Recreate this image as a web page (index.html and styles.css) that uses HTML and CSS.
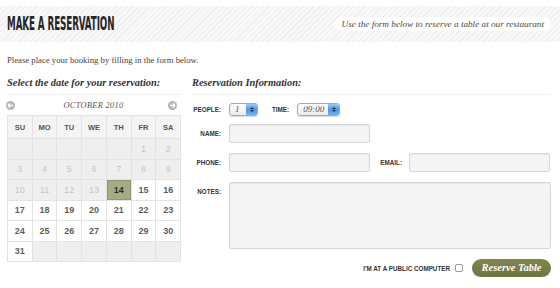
FILE: index.html
```html
<!DOCTYPE html>
<html>
<head>
<meta charset="utf-8">
<link rel="stylesheet" href="styles.css">
</head>
<body>
<header class="band">
  <h1 class="title">MAKE A RESERVATION</h1>
  <p class="tagline">Use the form below to reserve a table at our restaurant</p>
</header>
<main class="content">
  <p class="intro">Please place your booking by filling in the form below.</p>
  <div class="cols">
    <section class="cal-col">
      <h2 class="sec-title">Select the date for your reservation:</h2>
      <div class="cal-nav">
        <span class="nav-btn"><svg width="9" height="9" viewBox="0 0 9 9"><circle cx="4.5" cy="4.5" r="4.5" fill="#b5b5b5"/><path d="M2 4.5h5M2 4.5l2-2M2 4.5l2 2" stroke="#fff" stroke-width="1.4" fill="none"/></svg></span>
        <span class="month">OCTOBER 2010</span>
        <span class="nav-btn"><svg width="9" height="9" viewBox="0 0 9 9"><circle cx="4.5" cy="4.5" r="4.5" fill="#b5b5b5"/><path d="M2 4.5h5M7 4.5l-2-2M7 4.5l-2 2" stroke="#fff" stroke-width="1.4" fill="none"/></svg></span>
      </div>
      <div class="cal-grid">
        <div class="dow">SU</div><div class="dow">MO</div><div class="dow">TU</div><div class="dow">WE</div><div class="dow">TH</div><div class="dow">FR</div><div class="dow">SA</div>
        <div class="day empty"></div><div class="day empty"></div><div class="day empty"></div><div class="day empty"></div><div class="day empty"></div><div class="day past">1</div><div class="day past">2</div>
        <div class="day past">3</div><div class="day past">4</div><div class="day past">5</div><div class="day past">6</div><div class="day past">7</div><div class="day past">8</div><div class="day past">9</div>
        <div class="day past">10</div><div class="day past">11</div><div class="day past">12</div><div class="day past">13</div><div class="day sel">14</div><div class="day">15</div><div class="day">16</div>
        <div class="day">17</div><div class="day">18</div><div class="day">19</div><div class="day">20</div><div class="day">21</div><div class="day">22</div><div class="day">23</div>
        <div class="day">24</div><div class="day">25</div><div class="day">26</div><div class="day">27</div><div class="day">28</div><div class="day">29</div><div class="day">30</div>
        <div class="day">31</div><div class="day empty"></div><div class="day empty"></div><div class="day empty"></div><div class="day empty"></div><div class="day empty"></div><div class="day empty"></div>
      </div>
    </section>
    <section class="form-col">
      <h2 class="sec-title">Reservation Information:</h2>
      <div class="row row-sel">
        <label class="lbl">PEOPLE:</label>
        <span class="select sel-people"><span class="val">1</span><span class="spin"><i class="up"></i><i class="down"></i></span></span>
        <label class="lbl lbl-time">TIME:</label>
        <span class="select sel-time"><span class="val">09:00</span><span class="spin"><i class="up"></i><i class="down"></i></span></span>
      </div>
      <div class="row row-name">
        <label class="lbl">NAME:</label>
        <span class="input"></span>
      </div>
      <div class="row">
        <label class="lbl">PHONE:</label>
        <span class="input"></span>
        <label class="lbl lbl-email">EMAIL:</label>
        <span class="input"></span>
      </div>
      <div class="row row-notes">
        <label class="lbl">NOTES:</label>
        <span class="textarea"></span>
      </div>
      <div class="row row-submit">
        <label class="lbl lbl-public">I'M AT A PUBLIC COMPUTER</label>
        <span class="check"></span>
        <span class="btn">Reserve Table</span>
      </div>
    </section>
  </div>
</main>
</body>
</html>
```
FILE: styles.css
```css
html, body { margin: 0; padding: 0; background: #fff; }
body { padding-top: 6px; font-family: "Liberation Serif", serif; color: #444; }

.band {
  height: 36px;
  display: flex;
  align-items: center;
  justify-content: space-between;
  padding: 0 9px 0 7px;
  background: repeating-linear-gradient(135deg, #f8f8f8 0 2px, #ededed 2px 3px, #f8f8f8 3px 4px);
}
.title {
  margin: 0;
  font-family: "DejaVu Sans Condensed", "DejaVu Sans", sans-serif;
  font-weight: bold;
  font-size: 19.5px;
  line-height: 20px;
  color: #262626;
  letter-spacing: -0.2px;
  transform: scaleX(0.5);
  transform-origin: left center;
  white-space: nowrap;
}
.tagline {
  margin: 0;
  height: 14px;
  line-height: 14px;
  padding: 0 7px;
  border-radius: 7px;
  background: #fff;
  font-style: italic;
  font-size: 9.2px;
  color: #4a4a4a;
}

.content { padding: 0 9px 0 7px; }
.intro { margin: 0; padding-top: 11px; height: 14px; line-height: 14px; font-size: 8.7px; color: #444; }

.cols { display: grid; grid-template-columns: 174px 359px; column-gap: 11px; margin-top: 9px; }

.sec-title {
  margin: 0;
  font-size: 10.4px;
  font-weight: bold;
  font-style: italic;
  line-height: 14px;
  color: #333;
  padding-bottom: 4px;
  border-bottom: 1px solid #eeeeee;
}

.cal-nav { height: 20px; display: flex; align-items: center; justify-content: space-between; padding: 0 4px 0 0; margin-left: -1px; }
.nav-btn { width: 9px; height: 9px; display: block; }
.nav-btn svg { display: block; }
.month { font-style: italic; font-size: 8.4px; color: #555; letter-spacing: 0.3px; margin-left: 4px; }

.cal-grid {
  display: grid;
  grid-template-columns: repeat(7, 1fr);
  grid-template-rows: 22px repeat(6, 19.5px);
  gap: 1px;
  background: #e3e3e3;
  border: 1px solid #e3e3e3;
  font-family: "Liberation Sans", sans-serif;
}
.dow, .day { display: flex; align-items: center; justify-content: center; font-size: 9px; }
.dow { background: #f4f4f4; font-weight: bold; color: #555; font-size: 7.5px; }
.day { background: #fff; color: #5e5e5e; font-weight: bold; }
.day.empty { background: #efefef; }
.day.past { background: #efefef; color: #c4c4c4; font-weight: normal; }
.day.sel { background: #a7ab84; color: #2f2f22; box-shadow: inset 0 0 0 1px #939770; }

.form-col { display: flex; flex-direction: column; }
.row { display: flex; align-items: center; margin-top: 10px; }
.row-sel { margin-top: 8px; height: 13px; }
.row-name { margin-top: 8px; }
.row-notes { align-items: flex-start; margin-top: 10px; }
.row-submit { justify-content: flex-end; margin-top: 10px; }

.lbl {
  width: 29px;
  flex: none;
  text-align: right;
  margin-right: 8px;
  font-family: "Liberation Sans", sans-serif;
  font-weight: bold;
  font-size: 6.3px;
  color: #333;
  white-space: nowrap;
}
.lbl-time { width: auto; margin-left: 14px; }
.lbl-email { width: 32px; margin-right: 7px; }
.row-notes .lbl { margin-top: 6px; }
.lbl-public { width: auto; margin-right: 5px; }

.select {
  display: flex;
  align-items: center;
  height: 13px;
  box-sizing: border-box;
  border: 1px solid #a9a9a9;
  border-radius: 3px;
  background: linear-gradient(#fdfdfd, #ececec);
  box-shadow: 0 1px 1px rgba(0,0,0,0.15);
  font-style: italic;
  font-size: 9px;
  color: #555;
}
.sel-people { width: 29px; }
.sel-time { width: 43px; }
.select .val { flex: 1; padding-left: 5px; line-height: 11px; }
.spin {
  width: 11px;
  height: 11px;
  border-radius: 0 2px 2px 0;
  background: linear-gradient(#9ccbf5, #4f97e3 50%, #6eb0f0);
  display: flex;
  flex-direction: column;
  align-items: center;
  justify-content: center;
  gap: 1px;
}
.spin i { display: block; width: 0; height: 0; border-left: 2px solid transparent; border-right: 2px solid transparent; }
.spin .up { border-bottom: 2px solid #1b2e45; }
.spin .down { border-top: 2px solid #1b2e45; }

.input, .textarea {
  display: block;
  box-sizing: border-box;
  width: 141px;
  height: 19px;
  background: #f4f4f4;
  border: 1px solid #d6d6d6;
  border-radius: 2px;
  box-shadow: inset 0 1px 1px rgba(0,0,0,0.05);
}
.textarea { width: 322px; height: 67px; }

.check {
  width: 8px;
  height: 8px;
  box-sizing: border-box;
  border: 1px solid #9a9a9a;
  border-radius: 2px;
  background: #fff;
  margin-right: 9px;
}
.btn {
  width: 79px;
  height: 18px;
  border-radius: 9px;
  background: linear-gradient(#808650, #6e7440);
  color: #fff;
  font-weight: bold;
  font-style: italic;
  font-size: 10.5px;
  line-height: 18px;
  text-align: center;
  box-shadow: 0 1px 1px rgba(0,0,0,0.2);
}
```
